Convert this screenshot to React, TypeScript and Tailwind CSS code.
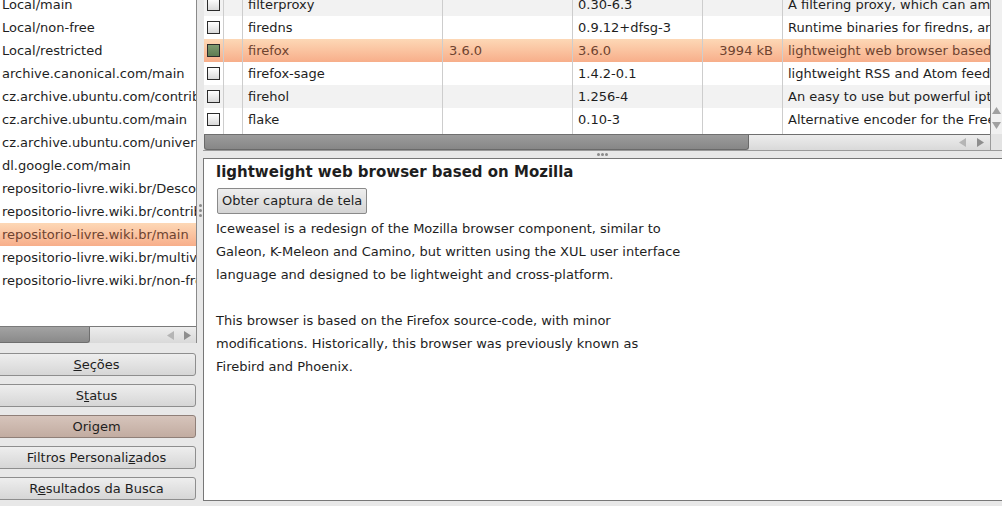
import React from "react";

const leftItems = [
  "Local/main",
  "Local/non-free",
  "Local/restricted",
  "archive.canonical.com/main",
  "cz.archive.ubuntu.com/contrib",
  "cz.archive.ubuntu.com/main",
  "cz.archive.ubuntu.com/universe",
  "dl.google.com/main",
  "repositorio-livre.wiki.br/Descontinuado",
  "repositorio-livre.wiki.br/contrib",
  "repositorio-livre.wiki.br/main",
  "repositorio-livre.wiki.br/multiverse",
  "repositorio-livre.wiki.br/non-free",
];

type Row = { name: string; inst: string; ver: string; size: string; desc: string; sel?: boolean };

const rows: Row[] = [
  { name: "filterproxy", inst: "", ver: "0.30-6.3", size: "", desc: "A filtering proxy, which can amend web pages" },
  { name: "firedns", inst: "", ver: "0.9.12+dfsg-3", size: "", desc: "Runtime binaries for firedns, an asynchronous" },
  { name: "firefox", inst: "3.6.0", ver: "3.6.0", size: "3994 kB", desc: "lightweight web browser based on Mozilla", sel: true },
  { name: "firefox-sage", inst: "", ver: "1.4.2-0.1", size: "", desc: "lightweight RSS and Atom feed reader" },
  { name: "firehol", inst: "", ver: "1.256-4", size: "", desc: "An easy to use but powerful iptables stateful" },
  { name: "flake", inst: "", ver: "0.10-3", size: "", desc: "Alternative encoder for the Free Lossless Audio" },
  { name: "", inst: "", ver: "", size: "", desc: "" },
];

function Tri({ dir, color }: { dir: "l" | "r" | "u" | "d"; color: string }) {
  const pts =
    dir === "l" ? "7,0 7,9 0,4.5" : dir === "r" ? "0,0 0,9 7,4.5" : dir === "u" ? "0,7 9,7 4.5,0" : "0,0 9,0 4.5,7";
  const w = dir === "l" || dir === "r" ? 7 : 9;
  const h = dir === "l" || dir === "r" ? 9 : 7;
  return (
    <svg width={w} height={h} viewBox={`0 0 ${w} ${h}`}>
      <polygon points={pts} fill={color} />
    </svg>
  );
}

function Checkbox({ checked }: { checked?: boolean }) {
  return checked ? (
    <div className="w-[13px] h-[13px] border border-[#2b2b2b] bg-linear-to-b from-[#7d9a70] to-[#5e7c52]" />
  ) : (
    <div className="w-[13px] h-[13px] border border-[#2b2b2b] bg-linear-to-b from-[#ffffff] to-[#d9d9d9]" />
  );
}

function SideButton({ label, active }: { label: React.ReactNode; active?: boolean }) {
  return (
    <div
      className={
        "w-[199px] h-[23px] rounded-[3px] border flex items-center justify-center " +
        (active
          ? "border-[#8f7f78] bg-linear-to-b from-[#d6c4bb] to-[#c2aca1]"
          : "border-[#8e8e8e] bg-linear-to-b from-[#eeeeee] to-[#d6d6d6]")
      }
    >
      {label}
    </div>
  );
}

export default function App() {
  const cellBase = "h-[23px] leading-[23px] whitespace-nowrap overflow-hidden border-r border-[#cdcdcd]";
  return (
    <div className="w-[1002px] h-[506px] overflow-hidden bg-[#e8e8e8] flex font-['DejaVu_Sans',sans-serif] text-[13px] text-[#1e1e1e]">
      {/* Left column */}
      <div className="w-[197px] shrink-0 flex flex-col">
        <div className="h-[343px] flex flex-col border-r border-[#8a8a8a] bg-white">
          <div className="h-[327px] overflow-hidden border-b border-[#7a7a7a]">
            <div className="mt-[-7px]">
              {leftItems.map((it, i) => (
                <div
                  key={i}
                  className={
                    "h-[23px] leading-[23px] pl-[2px] whitespace-nowrap " +
                    (it === "repositorio-livre.wiki.br/main"
                      ? "bg-linear-to-b from-[#fdd8b6] to-[#f7ae8a] text-[#6e4330]"
                      : "")
                  }
                >
                  {it}
                </div>
              ))}
            </div>
          </div>
          <div className="h-[16px] flex items-stretch bg-linear-to-b from-[#ededed] to-[#d9d9d9]">
            <div className="w-[90px] rounded-br-[3px] border-r border-b border-[#6f6f6f] bg-linear-to-b from-[#a3a3a3] to-[#8a8a8a]" />
            <div className="flex-1" />
            <div className="flex items-center gap-[10px] pr-[5px]">
              <Tri dir="l" color="#b5b5b5" />
              <Tri dir="r" color="#8e8e8e" />
            </div>
          </div>
        </div>
        <div className="mt-[10px] ml-[-3px] flex flex-col gap-[8px]">
          <SideButton label={<span><span className="underline">S</span>eções</span>} />
          <SideButton label={<span>S<span className="underline">t</span>atus</span>} />
          <SideButton label={<span>Origem</span>} active />
          <SideButton label={<span>Filtros Personali<span className="underline">z</span>ados</span>} />
          <SideButton label={<span>R<span className="underline">e</span>sultados da Busca</span>} />
        </div>
      </div>

      {/* Vertical splitter */}
      <div className="w-[6px] shrink-0 flex flex-col items-center pt-[204px] gap-[2px]">
        <div className="w-[3px] h-[3px] rounded-full bg-[#8a8a8a]" />
        <div className="w-[3px] h-[3px] rounded-full bg-[#8a8a8a]" />
        <div className="w-[3px] h-[3px] rounded-full bg-[#8a8a8a]" />
      </div>

      {/* Right column */}
      <div className="flex-1 flex flex-col min-w-0">
        {/* Package table */}
        <div className="h-[150px] flex flex-col pl-[1px]">
          <div className="h-[134px] flex bg-white">
            <div className="flex-1 overflow-hidden">
              <div className="mt-[-7px] grid grid-cols-[20px_19px_200px_130px_130px_80px_1fr]">
                {rows.map((r, i) => {
                  const bg = r.sel
                    ? "bg-linear-to-b from-[#fdd8b6] to-[#f7ae8a] text-[#6e4330]"
                    : i % 2 === 0 && r.name
                    ? "bg-[#f2f2f2]"
                    : "bg-white";
                  return (
                    <React.Fragment key={i}>
                      <div className={cellBase + " " + bg + " flex items-center justify-center"}>
                        {r.name ? <Checkbox checked={r.sel} /> : null}
                      </div>
                      <div className={cellBase + " " + bg} />
                      <div className={cellBase + " " + bg + " pl-[5px]"}>{r.name}</div>
                      <div className={cellBase + " " + bg + " pl-[6px]"}>{r.inst}</div>
                      <div className={cellBase + " " + bg + " pl-[5px]"}>{r.ver}</div>
                      <div className={cellBase + " " + bg + " pr-[9px] text-right"}>{r.size}</div>
                      <div className={"h-[23px] leading-[23px] whitespace-nowrap overflow-hidden pl-[5px] " + bg}>{r.desc}</div>
                    </React.Fragment>
                  );
                })}
              </div>
            </div>
            <div className="w-[12px] shrink-0 border-l border-[#8a8a8a] bg-[#f0f0f0] flex flex-col items-center justify-end pb-[5px] gap-[8px]">
              <Tri dir="u" color="#a0a0a0" />
              <Tri dir="d" color="#a0a0a0" />
            </div>
          </div>
          <div className="h-[16px] flex">
            <div className="flex-1 flex items-stretch bg-linear-to-b from-[#ededed] to-[#d9d9d9] border-t border-[#6f6f6f]">
              <div className="w-[545px] rounded-b-[3px] border-x border-b border-[#6a6a6a] bg-linear-to-b from-[#9c9c9c] to-[#878787]" />
              <div className="flex-1" />
              <div className="flex items-center gap-[11px] pr-[6px]">
                <Tri dir="l" color="#b5b5b5" />
                <Tri dir="r" color="#8e8e8e" />
              </div>
            </div>
            <div className="w-[12px] shrink-0 bg-[#e3e3e3] border-l border-[#9a9a9a]" />
          </div>
        </div>

        {/* Horizontal splitter */}
        <div className="h-[8px] flex items-center justify-center gap-[1px] border-t border-[#9a9a9a]">
          <div className="w-[3px] h-[3px] rounded-full bg-[#8a8a8a]" />
          <div className="w-[3px] h-[3px] rounded-full bg-[#8a8a8a]" />
          <div className="w-[3px] h-[3px] rounded-full bg-[#8a8a8a]" />
        </div>

        {/* Description */}
        <div className="h-[343px] bg-white border-t border-l border-b border-[#777777] pl-[12px] pt-[2px]">
          <div className="h-[23px] leading-[23px] text-[15px] font-bold whitespace-nowrap">lightweight web browser based on Mozilla</div>
          <div className="mt-[4px] ml-[1px] w-fit h-[26px] rounded-[2px] border border-[#8a8a8a] bg-linear-to-b from-[#eeeeee] to-[#d4d4d4] flex items-center px-[4px] whitespace-nowrap">
            Obter captura de tela
          </div>
          <div className="mt-[3px] leading-[23px]">
            <div>Iceweasel is a redesign of the Mozilla browser component, similar to</div>
            <div>Galeon, K-Meleon and Camino, but written using the XUL user interface</div>
            <div>language and designed to be lightweight and cross-platform.</div>
            <div className="h-[23px]" />
            <div>This browser is based on the Firefox source-code, with minor</div>
            <div>modifications. Historically, this browser was previously known as</div>
            <div>Firebird and Phoenix.</div>
          </div>
        </div>
      </div>
    </div>
  );
}
